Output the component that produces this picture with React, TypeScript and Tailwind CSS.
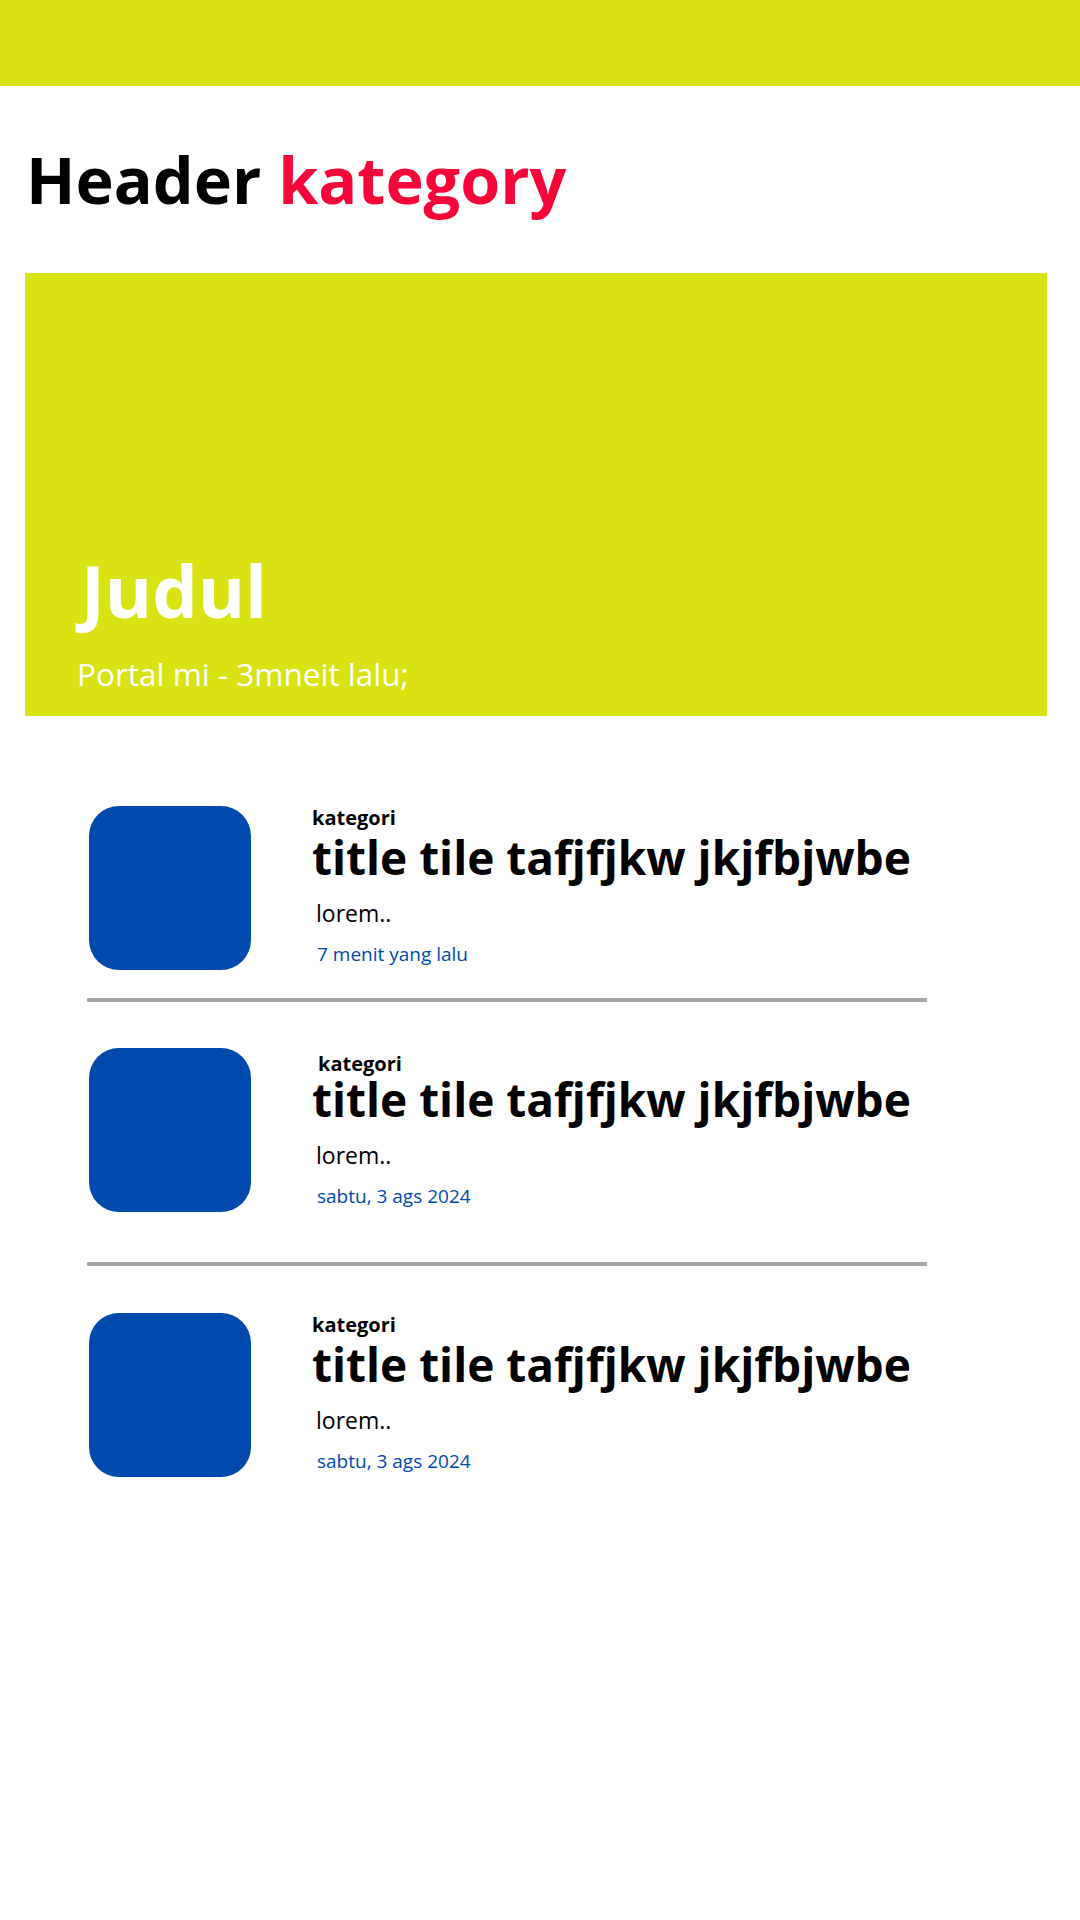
const items = [
  {
    date: '7 menit yang lalu',
    katClass: 'leading-[24px]',
    rowClass: 'mt-[90px]',
  },
  {
    date: 'sabtu, 3 ags 2024',
    katClass: 'pt-[7px] pl-[6px] leading-[17px]',
    rowClass: 'mt-[46px] mb-[50px]',
  },
  {
    date: 'sabtu, 3 ags 2024',
    katClass: 'leading-[24px]',
    rowClass: 'mt-[47px]',
  },
]

function NewsItem({ date, katClass, rowClass }: { date: string; katClass: string; rowClass: string }) {
  return (
    <div className={`flex items-start pl-[2px] ${rowClass}`}>
      <div className="w-[162px] h-[164px] shrink-0 rounded-[30px] bg-[#004aad]" />
      <div className="flex flex-col ml-[61px]">
        <p className={`text-[20px] font-bold text-black ${katClass}`}>kategori</p>
        <h2 className="mt-[1px] text-[46px] font-bold leading-[52px] text-black whitespace-nowrap">
          title tile tafjfjkw jkjfbjwbe
        </h2>
        <p className="mt-[16px] ml-[4px] text-[23px] leading-[28px] text-black">lorem..</p>
        <p className="mt-[15px] ml-[5px] text-[19px] leading-[24px] text-[#004aad]">{date}</p>
      </div>
    </div>
  )
}

export default function App() {
  return (
    <main className="w-[1080px] h-[1920px] bg-white font-['Open_Sans',sans-serif]">
      <div className="h-[86px] bg-[#d9e213]" />

      <h1 className="mt-[53px] ml-[26px] text-[64.7px] font-bold leading-[80px] text-black">
        Header <span className="text-[#f50538]">kategory</span>
      </h1>

      {/* hero */}
      <section className="mt-[54px] ml-[25px] w-[1022px] h-[443px] bg-[#d9e213] flex flex-col justify-end pb-[22px]">
        <h2 className="ml-[56px] text-[72px] font-bold leading-[80px] text-white">Judul</h2>
        <p className="mt-[24px] ml-[52px] text-[31.5px] leading-[40px] text-white">Portal mi - 3mneit lalu;</p>
      </section>

      <div className="ml-[87px] w-[840px] flex flex-col">
        <NewsItem {...items[0]} />
        <div className="mt-[28px] h-[4px] bg-[#a6a6a6]" />
        <NewsItem {...items[1]} />
        <div className="h-[4px] bg-[#a6a6a6]" />
        <NewsItem {...items[2]} />
      </div>
    </main>
  )
}
